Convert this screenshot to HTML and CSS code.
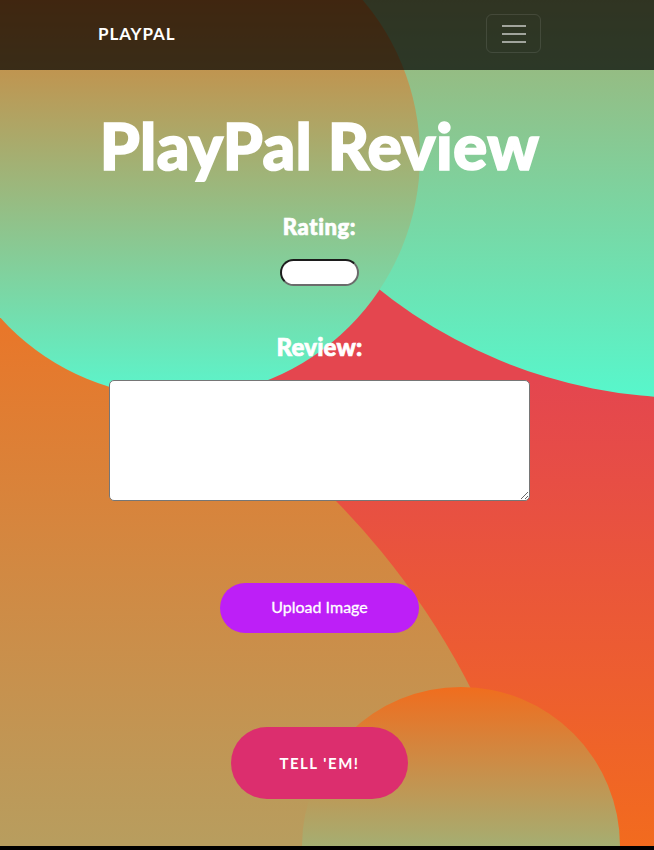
FILE: index.html
```html
<!DOCTYPE html>
<html lang="en">
<head>
<meta charset="utf-8">
<title>PlayPal Review</title>
<link rel="stylesheet" href="styles.css">
</head>
<body>
<div class="page">
  <div class="backdrop" aria-hidden="true">
    <div class="blob blob-right"></div>
    <div class="blob blob-orange"></div>
    <div class="blob blob-left"></div>
    <div class="blob blob-bottom"></div>
  </div>

  <nav class="navbar">
    <div class="container nav-inner">
      <a class="brand" href="#">PLAYPAL</a>
      <button class="toggler" type="button" aria-label="Toggle navigation">
        <svg width="24" height="20" viewBox="0 0 24 20">
          <path d="M0 2h24M0 10h24M0 18h24" stroke="rgba(255,255,255,0.55)" stroke-width="2"/>
        </svg>
      </button>
    </div>
  </nav>

  <main class="container content">
    <h1 class="title">PlayPal Review</h1>
    <label class="label label-rating" for="rating">Rating:</label>
    <input class="rating" id="rating" type="text">
    <label class="label label-review" for="review">Review:</label>
    <textarea class="review" id="review"></textarea>
    <button class="btn btn-upload" type="button">Upload Image</button>
    <button class="btn btn-submit" type="submit">TELL 'EM!</button>
  </main>
</div>
</body>
</html>
```

FILE: styles.css
```css
html {
  background: #000;
}

body {
  margin: 0;
  font-family: Lato, "Open Sans", sans-serif;
}

.page {
  position: relative;
  height: 846px;
  overflow: hidden;
  background: linear-gradient(to bottom, #e4464f 380px, #f26b1e 846px);
}

.backdrop {
  position: absolute;
  inset: 0;
  z-index: 0;
}

.blob {
  position: absolute;
  border-radius: 50%;
}

.blob-right {
  left: 191px;
  top: -600px;
  width: 998px;
  height: 998px;
  background: linear-gradient(to bottom, #e07030 0px, #a2b074 600px, #57f7cc 998px);
}

.blob-orange {
  left: -981px;
  top: 270px;
  width: 1536px;
  height: 1536px;
  background: linear-gradient(to bottom, #e8772a 60px, #b89d5e 570px);
}

.blob-left {
  left: -62px;
  top: -85px;
  width: 482px;
  height: 482px;
  background: linear-gradient(to bottom, #f06715 0px, #5af6cd 482px);
}

.blob-bottom {
  left: 302px;
  top: 687px;
  width: 318px;
  height: 318px;
  background: linear-gradient(to bottom, #f06d1e 0px, #a5ae72 159px);
}

.container {
  position: relative;
  z-index: 1;
  width: 443px;
  margin: 0 113px 0 98px;
}

.navbar {
  position: relative;
  z-index: 1;
  height: 70px;
  background: rgba(0, 0, 0, 0.7);
}

.nav-inner {
  height: 70px;
  display: flex;
  align-items: center;
  justify-content: space-between;
}

.brand {
  margin-bottom: 4px;
  color: #fff;
  text-decoration: none;
  font-weight: 700;
  font-size: 17px;
  letter-spacing: 0.9px;
  line-height: 1;
}

.toggler {
  width: 55px;
  height: 39px;
  margin-top: -3px;
  padding: 0;
  display: flex;
  align-items: center;
  justify-content: center;
  background: transparent;
  border: 1px solid rgba(255, 255, 255, 0.1);
  border-radius: 6px;
}

.content {
  display: flex;
  flex-direction: column;
  align-items: center;
  color: #fff;
}

.title {
  margin: 44px 0 0;
  font-size: 64px;
  font-weight: 900;
  line-height: 1;
  letter-spacing: 0.4px;
  -webkit-text-stroke: 1.6px #fff;
}

.label {
  display: block;
  font-weight: 900;
  line-height: 1;
  -webkit-text-stroke: 0.7px #fff;
}

.label-rating {
  margin-top: 38px;
  font-size: 22px;
  letter-spacing: 0.6px;
}

.rating {
  box-sizing: border-box;
  width: 79px;
  height: 27px;
  margin-top: 21px;
  background: #fff;
  border: 2px solid;
  border-color: #1c1c1c #6b6b6b #6b6b6b #1c1c1c;
  border-radius: 14px;
}

.label-review {
  margin-top: 49px;
  font-size: 24px;
  letter-spacing: 0.2px;
}

.review {
  box-sizing: border-box;
  width: 421px;
  height: 121px;
  margin-top: 21px;
  background: #fff;
  border: 1px solid #767676;
  border-radius: 5px;
}

.btn {
  border: none;
  color: #fff;
  font-family: Lato, "Open Sans", sans-serif;
  cursor: pointer;
}

.btn-upload {
  width: 199px;
  height: 50px;
  margin-top: 82px;
  padding: 0 0 3px;
  background: #bd1ff7;
  border-radius: 25px;
  font-size: 16px;
  font-weight: 400;
  -webkit-text-stroke: 0.3px #fff;
}

.btn-submit {
  width: 177px;
  height: 72px;
  margin-top: 94px;
  background: #dc2e6e;
  border-radius: 36px;
  font-size: 15px;
  font-weight: 700;
  letter-spacing: 1.5px;
}
```
